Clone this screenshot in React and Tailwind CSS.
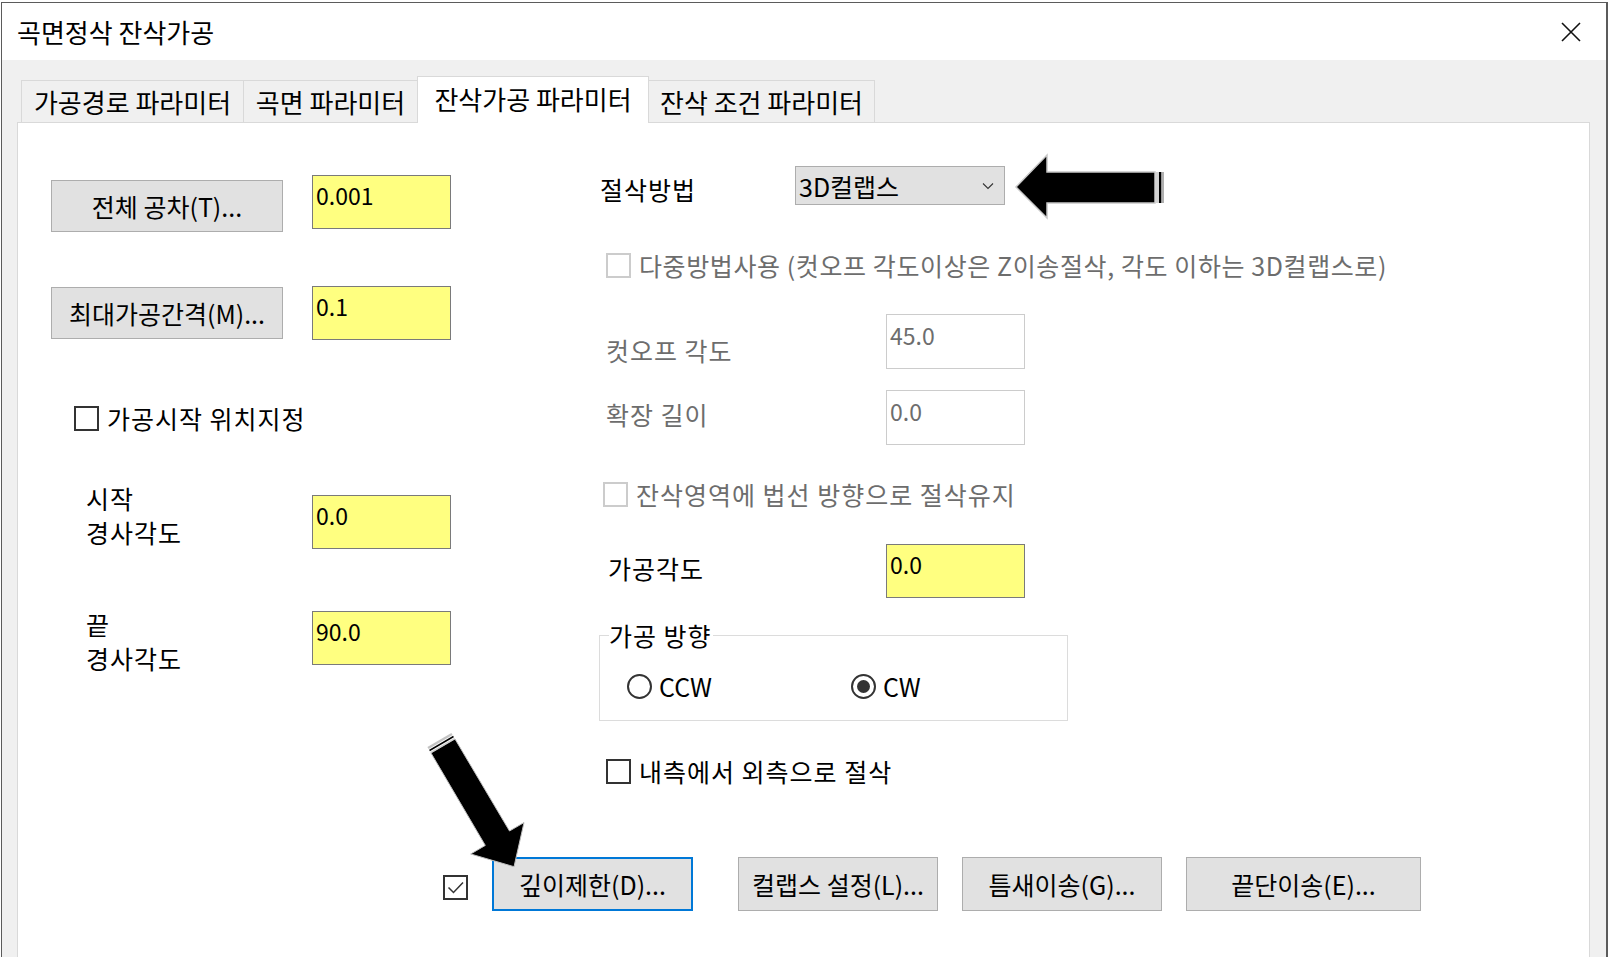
import React from "react";

function Btn({ children, className }) {
  return (
    <div
      className={
        "flex items-center justify-center bg-[#e1e1e1] text-[25px] leading-none text-black shrink-0 " +
        className
      }
    >
      {children}
    </div>
  );
}

function YInput({ value, className }) {
  return (
    <div
      className={
        "w-[139px] bg-[#ffff80] border border-[#7a7a7a] pl-[3px] pt-[3px] text-[23px] tracking-normal leading-[32px] text-black shrink-0 " +
        className
      }
    >
      {value}
    </div>
  );
}

function DInput({ value, className }) {
  return (
    <div
      className={
        "w-[139px] bg-white border border-[#cccccc] pl-[3px] pt-[4px] text-[23px] tracking-normal leading-[32px] text-[#6d6d6d] shrink-0 " +
        className
      }
    >
      {value}
    </div>
  );
}

function Box({ disabled, checked }) {
  return (
    <div
      className={
        disabled
          ? "w-[25px] h-[25px] border-2 border-[#cccccc] bg-white shrink-0"
          : "w-[25px] h-[25px] border-2 border-[#333333] bg-white shrink-0 flex items-center justify-center"
      }
    >
      {checked ? (
        <svg width="19" height="19" viewBox="0 0 19 19">
          <path d="M2.5 9.5 L7.5 14.5 L17 4.5" fill="none" stroke="#333" strokeWidth="1.5" />
        </svg>
      ) : null}
    </div>
  );
}

function Radio({ checked }) {
  return (
    <div className="w-[25px] h-[25px] rounded-full border-2 border-[#333333] bg-white flex items-center justify-center shrink-0">
      {checked ? <div className="w-[13px] h-[13px] rounded-full bg-[#333333]" /> : null}
    </div>
  );
}

export default function App() {
  return (
    <div className="relative w-[1610px] h-[957px] overflow-hidden bg-white font-['Noto_Sans_CJK_KR',sans-serif] text-black">
      <div className="ml-[1px] mt-[2px] w-[1607px] h-[990px] border-t border-l border-r-2 border-[#5b5b5b] flex flex-col">
        {/* Title bar */}
        <div className="h-[57px] bg-white flex items-center justify-between pl-[15px] pr-[25px] shrink-0">
          <span className="text-[26px] leading-none">곡면정삭 잔삭가공</span>
          <svg width="20" height="20" viewBox="0 0 20 20">
            <path d="M1 1 L19 19 M19 1 L1 19" stroke="#111" strokeWidth="1.6" fill="none" />
          </svg>
        </div>

        {/* Body */}
        <div className="flex-1 bg-[#f0f0f0] pt-[16px] pl-[15px] pr-[16px] flex flex-col">
          {/* Tabs */}
          <div className="flex items-end h-[47px] -mb-px pl-[4px] relative z-10 text-[26px]">
            <div className="w-[223px] h-[43px] border border-[#d9d9d9] bg-[#f0f0f0] flex items-center justify-center pb-[1px]">
              가공경로 파라미터
            </div>
            <div className="w-[175px] h-[43px] -ml-px border border-[#d9d9d9] bg-[#f0f0f0] flex items-center justify-center pb-[1px]">
              곡면 파라미터
            </div>
            <div className="w-[232px] h-[47px] -ml-px border border-b-0 border-[#d9d9d9] bg-white flex items-center justify-center pb-[3px] relative z-10">
              잔삭가공 파라미터
            </div>
            <div className="w-[227px] h-[43px] -ml-px border border-[#d9d9d9] bg-[#f0f0f0] flex items-center justify-center pb-[1px]">
              잔삭 조건 파라미터
            </div>
          </div>

          {/* Panel */}
          <div className="flex-1 bg-white border border-[#d9d9d9] flex flex-col text-[25px] tracking-[1px]">
            <div className="flex">
              {/* Left column */}
              <div className="w-[581px] pl-[33px] pt-[52px] flex flex-col shrink-0">
                <div className="flex items-start gap-[29px]">
                  <Btn className="mt-[5px] w-[232px] h-[52px] border border-[#adadad] tracking-normal">전체 공차(T)...</Btn>
                  <YInput value="0.001" className="h-[54px]" />
                </div>
                <div className="flex items-start gap-[29px] mt-[54px]">
                  <Btn className="mt-[1px] w-[232px] h-[52px] border border-[#adadad] tracking-normal">최대가공간격(M)...</Btn>
                  <YInput value="0.1" className="h-[54px]" />
                </div>
                <div className="flex items-center gap-[8px] mt-[66px] pl-[23px] h-[24px]">
                  <Box />
                  <span className="leading-[25px]">가공시작 위치지정</span>
                </div>
                <div className="flex items-start mt-[51px]">
                  <div className="w-[261px] pl-[35px] leading-[34px]">
                    <div>시작</div>
                    <div>경사각도</div>
                  </div>
                  <YInput value="0.0" className="h-[54px] mt-[14px]" />
                </div>
                <div className="flex items-start mt-[58px]">
                  <div className="w-[261px] pl-[35px] leading-[34px]">
                    <div>끝</div>
                    <div>경사각도</div>
                  </div>
                  <YInput value="90.0" className="h-[54px] mt-[4px]" />
                </div>
              </div>

              {/* Right column */}
              <div className="flex-1 pt-[43px] flex flex-col">
                <div className="flex items-center h-[39px]">
                  <div className="w-[196px] pl-[1px] leading-[34px] pt-[6px]">절삭방법</div>
                  <div className="w-[210px] h-[39px] bg-[#e1e1e1] border border-[#adadad] flex items-center justify-between pl-[3px] pr-[10px] tracking-normal">
                    <span className="leading-[34px]">3D컬랩스</span>
                    <svg width="12" height="8" viewBox="0 0 12 8">
                      <path d="M1 1.5 L6 6.5 L11 1.5" fill="none" stroke="#333" strokeWidth="1.1" />
                    </svg>
                  </div>
                </div>

                <div className="flex items-center gap-[8px] mt-[48px] pl-[7px] h-[25px]">
                  <Box disabled />
                  <span className="leading-[25px] text-[#6d6d6d] whitespace-nowrap tracking-[0.6px]">
                    다중방법사용 (컷오프 각도이상은 Z이송절삭, 각도 이하는 3D컬랩스로)
                  </span>
                </div>

                <div className="flex items-start mt-[36px]">
                  <div className="w-[287px] pl-[7px] leading-[34px] mt-[19px] text-[#6d6d6d]">컷오프 각도</div>
                  <DInput value="45.0" className="h-[55px]" />
                </div>

                <div className="flex items-start mt-[21px]">
                  <div className="w-[287px] pl-[7px] leading-[34px] mt-[7px] text-[#6d6d6d]">확장 길이</div>
                  <DInput value="0.0" className="h-[55px]" />
                </div>

                <div className="flex items-center gap-[8px] mt-[37px] pl-[4px] h-[25px]">
                  <Box disabled />
                  <span className="leading-[25px] text-[#6d6d6d]">잔삭영역에 법선 방향으로 절삭유지</span>
                </div>

                <div className="flex items-start mt-[37px]">
                  <div className="w-[287px] pl-[9px] leading-[34px] mt-[7px]">가공각도</div>
                  <YInput value="0.0" className="h-[54px]" />
                </div>

                <div className="relative mt-[37px] w-[469px] h-[86px] border border-[#dcdcdc]">
                  <span className="absolute left-[9px] top-[-18px] bg-white leading-[34px] pr-[1px]">가공 방향</span>
                  <div className="flex items-center pt-[38px] pl-[27px] tracking-normal">
                    <div className="w-[224px] flex items-center gap-[7px]">
                      <Radio />
                      <span className="leading-[25px]">CCW</span>
                    </div>
                    <div className="flex items-center gap-[7px]">
                      <Radio checked />
                      <span className="leading-[25px]">CW</span>
                    </div>
                  </div>
                </div>

                <div className="flex items-center gap-[8px] mt-[38px] pl-[7px] h-[25px]">
                  <Box />
                  <span className="leading-[25px]">내측에서 외측으로 절삭</span>
                </div>
              </div>
            </div>

            {/* Bottom buttons */}
            <div className="flex items-start mt-[73px] pl-[425px] tracking-normal">
              <div className="mt-[18px]">
                <Box checked />
              </div>
              <Btn className="ml-[24px] w-[201px] h-[54px] border-2 border-[#0078d7]">깊이제한(D)...</Btn>
              <Btn className="ml-[45px] w-[200px] h-[54px] border border-[#adadad]">컬랩스 설정(L)...</Btn>
              <Btn className="ml-[24px] w-[200px] h-[54px] border border-[#adadad]">틈새이송(G)...</Btn>
              <Btn className="ml-[24px] w-[235px] h-[54px] border border-[#adadad]">끝단이송(E)...</Btn>
            </div>
          </div>
        </div>
      </div>

      {/* Annotation arrows */}
      <svg
        className="absolute left-0 top-0 pointer-events-none"
        width="1610"
        height="957"
        viewBox="0 0 1610 957"
      >
        {/* left-pointing arrow */}
        <polygon
          points="1016,187 1047,155 1047,172 1155,172 1155,203 1047,203 1047,218"
          fill="#000"
          stroke="#c8c8c8"
          strokeWidth="1.5"
        />
        <rect x="1155" y="172" width="4" height="31" fill="#d4d4d4" />
        <rect x="1159" y="172" width="2.5" height="31" fill="#000" />
        <rect x="1161.5" y="172" width="2.5" height="31" fill="#b0b0b0" />

        {/* diagonal arrow */}
        <polygon
          points="455,739 509.5,831 524,822.6 514,866.7 470.7,854 485.3,845.4 431,753"
          fill="#000"
          stroke="#bdbdbd"
          strokeWidth="1"
        />
        <line x1="452" y1="734" x2="428" y2="748" stroke="#c4c4c4" strokeWidth="2.5" />
        <line x1="453.5" y1="736.5" x2="429.5" y2="750.5" stroke="#000" strokeWidth="1.5" />
        <line x1="454.5" y1="738.5" x2="430.5" y2="752.5" stroke="#d0d0d0" strokeWidth="1.2" />
      </svg>
    </div>
  );
}
